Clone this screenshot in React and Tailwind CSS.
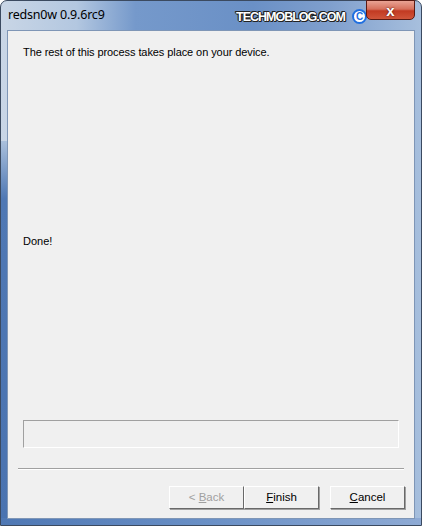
import React from 'react'

const Btn = ({ children, disabled }) => (
  <button
    disabled={disabled}
    className={`w-[75px] h-[23px] bg-[#f0f0f0] border border-t-white border-l-white border-b-[#696969] border-r-[#696969] shadow-[1px_1px_0_#a0a0a0] text-[11.5px] ${
      disabled ? 'text-[#a0a0a0]' : 'text-black'
    }`}
  >
    {children}
  </button>
)

export default function App() {
  return (
    <div className="w-[422px] h-[526px] bg-white overflow-hidden">
      <div className="relative w-[422px] h-[526px] rounded-t-[7px] border border-[#3b4a60] flex flex-col bg-[linear-gradient(90deg,#c9d6e6_0%,#b3c7e0_18%,#7599cb_32%,#6a90c6_60%,#7f9fcd_78%,#a7bfdd_100%)] font-['Liberation_Sans',sans-serif]">
        {/* left frame tint */}
        <div className="absolute left-0 top-[140px] bottom-0 w-[6px] bg-[linear-gradient(180deg,#aac0dc_0%,#4f78b4_15%,#4a73b0_100%)]" />
        <div className="absolute left-0 right-0 bottom-0 h-[7px] bg-[linear-gradient(90deg,#4f78b4_0%,#6a90c6_50%,#8eaad4_100%)]" />

        {/* title bar */}
        <div className="h-[29px] flex items-center pl-[7px] shrink-0">
          <span className="text-[12.5px] text-black font-['Noto_Sans',sans-serif] tracking-[-0.2px]">
            redsn0w 0.9.6rc9
          </span>
        </div>

        {/* watermark */}
        <span className="absolute left-[235px] top-[7px] text-[12.5px] font-bold text-white tracking-[-1px] [text-shadow:1px_0_0_#222,-1px_0_0_#222,0_1px_0_#222,0_-1px_0_#222,1px_1px_0_#222,-1px_-1px_0_#222] font-['Liberation_Sans',sans-serif]">
          TECHMOBLOG.COM
        </span>
        <span className="absolute left-[351px] top-[8px] w-[15px] h-[15px] rounded-full bg-white border-[2px] border-[#1f6fe0] flex items-center justify-center text-[10px] font-bold text-[#1f6fe0] leading-none">
          C
        </span>

        {/* close button */}
        <div className="absolute right-[6px] top-[-1px] w-[49px] h-[20px] rounded-b-[5px] border border-[#5a1a12] bg-[linear-gradient(180deg,#e9a394_0%,#d6705c_45%,#c23a22_55%,#d0553a_100%)] flex items-center justify-center">
          <span className="text-white font-bold text-[15px] leading-none [text-shadow:0_0_2px_#3a0a05]">x</span>
        </div>

        {/* client area */}
        <div className="relative mx-[6px] h-[489px] border border-[#7f96b6] bg-[#f0f0f0] flex flex-col text-[11px] text-black">
          <p className="ml-[15px] mt-[15px] leading-[13px] tracking-[-0.08px]">
            The rest of this process takes place on your device.
          </p>
          <p className="ml-[15px] mt-[176px] leading-[13px]">Done!</p>

          <div className="ml-[15px] mt-[172px] w-[376px] h-[28px] border border-t-[#a0a0a0] border-l-[#a0a0a0] border-b-white border-r-white" />

          <div className="ml-[10px] mt-[20px] w-[386px] h-[2px] border-t border-t-[#a0a0a0] border-b border-b-white" />

          <div className="flex justify-end mr-[9px] mt-[16px]">
            <Btn disabled>
              &lt; <u>B</u>ack
            </Btn>
            <Btn>
              <u>F</u>inish
            </Btn>
            <span className="w-[11px]" />
            <Btn>
              <u>C</u>ancel
            </Btn>
          </div>
        </div>
      </div>
    </div>
  )
}
